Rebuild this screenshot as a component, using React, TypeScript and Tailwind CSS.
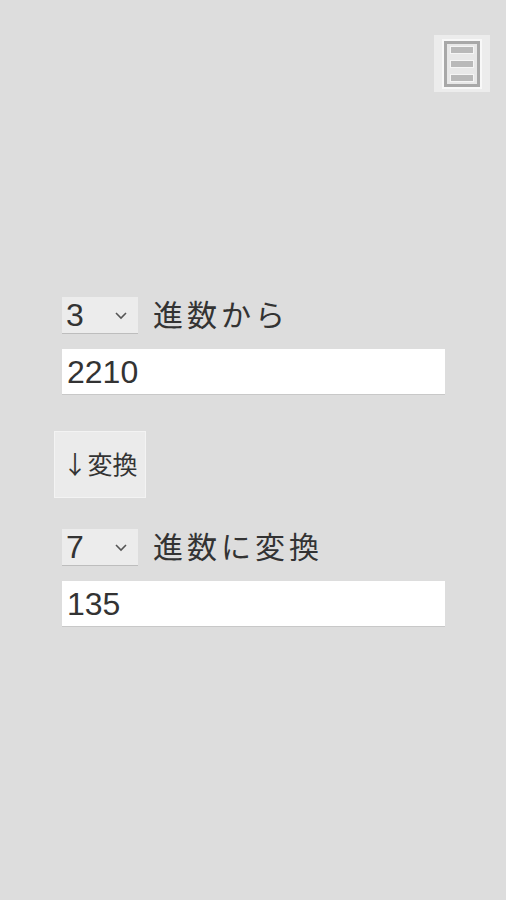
import { useState } from "react";

const FONT = { fontFamily: '"Liberation Sans", "Noto Sans CJK JP", sans-serif' };
const CJK = { fontFamily: '"Noto Sans CJK JP", sans-serif' };

function convert(value: string, from: number, to: number): string {
  const n = parseInt(value, from);
  if (Number.isNaN(n)) return "";
  return n.toString(to);
}

function BaseSelect({ value, onChange }: { value: number; onChange: (v: number) => void }) {
  return (
    <div className="relative w-[76px] h-[37px] bg-[#ececec] border-b border-[#bdbdbd]">
      <select
        value={value}
        onChange={(e) => onChange(Number(e.target.value))}
        className="appearance-none w-full h-full bg-transparent pl-[4px] text-[32px] leading-none text-[#333] outline-none"
        style={FONT}
      >
        {Array.from({ length: 35 }, (_, i) => i + 2).map((b) => (
          <option key={b} value={b}>
            {b}
          </option>
        ))}
      </select>
      <svg
        className="absolute right-[10px] top-[14px] pointer-events-none"
        width="14"
        height="9"
        viewBox="0 0 14 9"
        fill="none"
        stroke="#555"
        strokeWidth="1.6"
      >
        <path d="M2 2l5 5 5-5" />
      </svg>
    </div>
  );
}

export default function App() {
  const [from, setFrom] = useState(3);
  const [to, setTo] = useState(7);
  const [input, setInput] = useState("2210");
  const [output, setOutput] = useState("135");

  return (
    <div className="w-[506px] h-[900px] bg-[#dddddd] text-[#333]" style={FONT}>
      <div className="flex justify-end pt-[35px] pr-[16px]">
        <div className="w-[56px] h-[57px] bg-[#ececec] flex items-center justify-center">
          <div className="w-[40px] h-[50px] border-[2px] border-[#f8f8f8] flex">
            <div className="flex-1 border-[3px] border-[#a8a8a8] bg-[#e8e8e8] flex flex-col items-center justify-center gap-[6px]">
              <div className="w-[24px] h-[8px] bg-[#b9b9b9] border border-[#f5f5f5]" />
              <div className="w-[24px] h-[8px] bg-[#b9b9b9] border border-[#f5f5f5]" />
              <div className="w-[24px] h-[8px] bg-[#b9b9b9] border border-[#f5f5f5]" />
            </div>
          </div>
        </div>
      </div>

      <div className="pt-[205px] pl-[62px] pr-[61px]">
        <div className="flex items-center gap-[15px]">
          <BaseSelect value={from} onChange={setFrom} />
          <span className="text-[30px] leading-none tracking-[4px] pb-[6px]" style={CJK}>進数から</span>
        </div>
        <input
          value={input}
          onChange={(e) => setInput(e.target.value)}
          className="mt-[15px] w-full h-[46px] bg-white px-[5px] text-[32px] text-[#333] outline-none border-b border-[#c8c8c8]"
          style={FONT}
        />

        <button
          onClick={() => setOutput(convert(input, from, to))}
          className="mt-[36px] -ml-[8px] w-[92px] h-[67px] bg-[#ebebeb] border border-[#f3f3f3] text-[25px] leading-none text-[#333] text-center pb-[3px]"
          style={CJK}
        >
          ↓変換
        </button>

        <div className="mt-[31px] flex items-center gap-[15px]">
          <BaseSelect value={to} onChange={setTo} />
          <span className="text-[30px] leading-none tracking-[4px] pb-[6px]" style={CJK}>進数に変換</span>
        </div>
        <input
          value={output}
          readOnly
          className="mt-[15px] w-full h-[46px] bg-white px-[5px] text-[32px] text-[#333] outline-none border-b border-[#c8c8c8]"
          style={FONT}
        />
      </div>
    </div>
  );
}
